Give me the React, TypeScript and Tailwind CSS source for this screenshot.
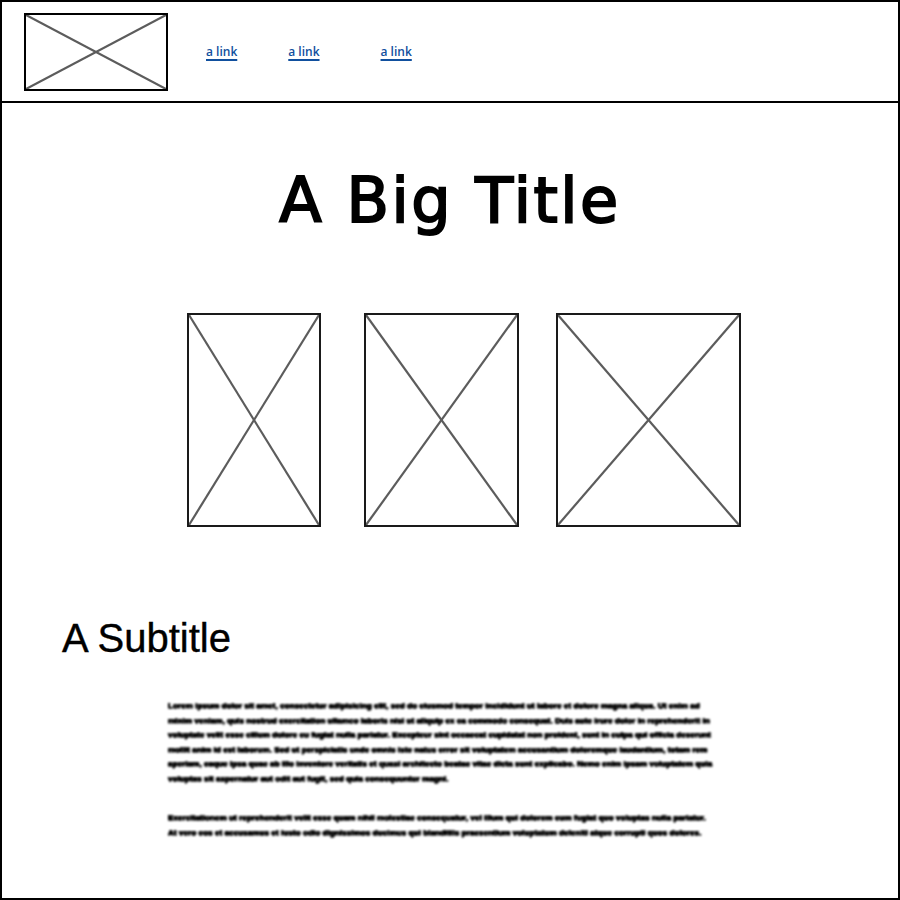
const LOREM_1 =
  'Lorem ipsum dolor sit amet, consectetur adipisicing elit, sed do eiusmod tempor incididunt ut labore et dolore magna aliqua. Ut enim ad minim veniam, quis nostrud exercitation ullamco laboris nisi ut aliquip ex ea commodo consequat. Duis aute irure dolor in reprehenderit in voluptate velit esse cillum dolore eu fugiat nulla pariatur. Excepteur sint occaecat cupidatat non proident, sunt in culpa qui officia deserunt mollit anim id est laborum. Sed ut perspiciatis unde omnis iste natus error sit voluptatem accusantium doloremque laudantium, totam rem aperiam, eaque ipsa quae ab illo inventore veritatis et quasi architecto beatae vitae dicta sunt explicabo. Nemo enim ipsam voluptatem quia voluptas sit aspernatur aut odit aut fugit, sed quia consequuntur magni.';

const LOREM_2 =
  'Exercitationem ut reprehenderit velit esse quam nihil molestiae consequatur, vel illum qui dolorem eum fugiat quo voluptas nulla pariatur. At vero eos et accusamus et iusto odio dignissimos ducimus qui blanditiis praesentium voluptatum deleniti atque corrupti quos dolores.';

// Grey X used by every image placeholder
function Placeholder({ className }: { className: string }) {
  return (
    <div className={`relative border-2 border-[#1a1a1a] bg-white ${className}`}>
      <svg className="absolute inset-0 h-full w-full" viewBox="0 0 100 100" preserveAspectRatio="none">
        <line x1="0" y1="0" x2="100" y2="100" stroke="#5c5c5c" strokeWidth="2.2" vectorEffect="non-scaling-stroke" />
        <line x1="100" y1="0" x2="0" y2="100" stroke="#5c5c5c" strokeWidth="2.2" vectorEffect="non-scaling-stroke" />
      </svg>
    </div>
  );
}

// Balsamiq-style "blurred" text block
function Scribble({ text }: { text: string }) {
  return (
    <p className="font-['Liberation_Sans',sans-serif] text-[8px] font-black leading-[14.5px] tracking-[0.1px] text-black blur-[0.8px] [text-shadow:0.6px_0_0_#000,-0.6px_0_0_#000,0_0.5px_0_#000]">
      {text}
    </p>
  );
}

export default function App() {
  const links = [
    { label: 'a link', margin: 'ml-[38px]' },
    { label: 'a link', margin: 'ml-[51px]' },
    { label: 'a link', margin: 'ml-[61px]' },
  ];

  return (
    <div className="h-[900px] w-[900px] border-2 border-black bg-white">
      {/* Header */}
      <div className="flex h-[101px] items-center border-b-2 border-black">
        <Placeholder className="ml-[22px] h-[78px] w-[144px] border-black" />
        {links.map((l, i) => (
          <a
            key={i}
            href="#"
            className={`${l.margin} font-['Open_Sans',sans-serif] text-[12px] font-semibold leading-none text-[#11509e] underline decoration-[1.5px] underline-offset-[3px]`}
          >
            {l.label}
          </a>
        ))}
      </div>

      {/* Body */}
      <div className="flex flex-col">
        <h1 className="mt-[67px] text-center font-['DejaVu_Sans',sans-serif] text-[62px] leading-none tracking-[2.5px] text-black [-webkit-text-stroke:2px_black]">
          A Big Title
        </h1>

        <div className="mt-[81px] flex pl-[185px]">
          <Placeholder className="h-[214px] w-[134px]" />
          <Placeholder className="ml-[43px] h-[214px] w-[155px]" />
          <Placeholder className="ml-[37px] h-[214px] w-[185px]" />
        </div>

        <h2 className="ml-[60px] mt-[91px] font-['Liberation_Sans',sans-serif] text-[40px] leading-none text-black [-webkit-text-stroke:0.4px_black]">
          A Subtitle
        </h2>

        <div className="ml-[166px] mt-[41px] w-[548px] space-y-[25px]">
          <Scribble text={LOREM_1} />
          <Scribble text={LOREM_2} />
        </div>
      </div>
    </div>
  );
}
